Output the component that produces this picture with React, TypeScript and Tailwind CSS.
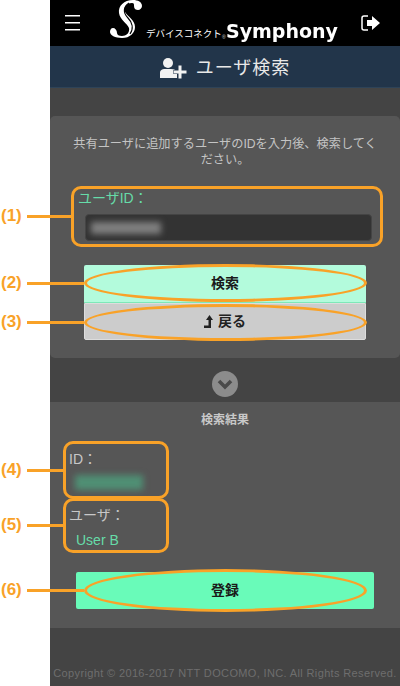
import React from 'react';

const font = { fontFamily: '"Liberation Sans", "Noto Sans CJK JP", sans-serif' };

function Callout({ label, y, lineEnd }: { label: string; y: number; lineEnd: number }) {
  return (
    <div className="absolute left-0 flex items-center" style={{ top: y - 10, height: 20 }}>
      <span className="w-[27px] whitespace-nowrap pl-[1px] text-[17px] font-bold leading-5 text-[#f9a228]">{label}</span>
      <span className="h-[3px] bg-[#f9a228]" style={{ width: lineEnd - 27 }} />
    </div>
  );
}

function Ring({ x, y, w, h, round }: { x: number; y: number; w: number; h: number; round?: boolean }) {
  return (
    <div
      className={`pointer-events-none absolute border-[3px] border-[#f9a228] ${round ? 'rounded-[50%]' : 'rounded-[10px]'}`}
      style={{ left: x, top: y, width: w, height: h }}
    />
  );
}

function Logo() {
  return (
    <div className="flex h-[46px] w-[226px] items-end">
      <svg width="34" height="40" viewBox="0 0 34 40" className="mb-[6px] shrink-0">
        <path
          d="M32 6C32 2 28 0 23 0C14 0 8 6 9 13C10 20 17 23 19 28C20 33 16 36 12 36C9 36 7 35 7 33C7 30 5 28 3 28C1 28 0 30 0 32C0 35 5 38 12 38C20 38 25 33 25 27C25 20 18 17 15 12C13 8 16 3 22 3C24 3 24 4 24 6C24 9 26 10 28 10C30 10 32 8 32 6Z"
          fill="#fff"
        />
        <path d="M19 3C13 7 13 13 18 18C22 22 24 28 20 34" fill="none" stroke="#000" strokeWidth="1.200" />
      </svg>
      <span className="mb-[6px] ml-[2px] w-[76px] shrink-0 whitespace-nowrap text-[9.5px] leading-3 text-white">デバイスコネクト</span>
      <span className="mb-[6px] w-[4px] shrink-0 text-[5px] leading-none text-gray-300">®</span>
      <span
        className="mb-[3px] w-[110px] shrink-0 origin-left scale-x-[0.95] whitespace-nowrap text-[20px] font-bold leading-6 text-white"
        style={{ fontFamily: '"DejaVu Sans", sans-serif' }}
      >
        Symphony
      </span>
    </div>
  );
}

export default function App() {
  return (
    <div className="relative flex h-[686px] w-[400px] overflow-hidden bg-white" style={font}>
      <div className="w-[50px] shrink-0" />
      <div className="flex min-w-0 flex-1 flex-col bg-[#444444]">
        <header className="flex h-[46px] shrink-0 items-center bg-black pl-[15px]">
          <svg width="16" height="16" viewBox="0 0 16 16" className="shrink-0">
            <path d="M0 0h15v1.500H0zM0 7h15v1.500H0zM0 14h15v1.500H0z" fill="#fff" />
          </svg>
          <div className="ml-[29px]">
            <Logo />
          </div>
          <svg width="20" height="16" viewBox="0 0 20 16" className="ml-[25px] shrink-0">
            <path d="M7 1H3a2 2 0 0 0-2 2v10a2 2 0 0 0 2 2h4" fill="none" stroke="#fff" strokeWidth="1.500" />
            <path d="M6 5h5V1l8 7-8 7v-4H6z" fill="#fff" />
          </svg>
        </header>
        <div className="flex h-[42px] shrink-0 items-center justify-center gap-[9px] border-b border-[#2e4358] bg-[#22354a] pt-[3px]">
          <svg width="27" height="21" viewBox="0 0 27 21">
            <circle cx="8" cy="5" r="5" fill="#f2f2f2" />
            <path d="M0 20v-5c0-3 2-4 5-4h6c3 0 5 1 6 3v6z" fill="#f2f2f2" />
            <path d="M18.500 7.500h3v5h5v3h-5v5h-3v-5h-5v-3h5z" fill="#f2f2f2" stroke="#22354a" strokeWidth="1" paintOrder="stroke" />
          </svg>
          <span className="text-[18px] leading-6 tracking-[1px] text-[#e8e8e8]">ユーザ検索</span>
        </div>
        <div className="h-[28px] shrink-0" />
        <section className="h-[242px] shrink-0 rounded-[5px] bg-[#565656] px-[21px] pt-[20px]">
          <p className="text-center text-[12.2px] leading-4 text-[#c4c4c4]">
            共有ユーザに追加するユーザのIDを入力後、検索してください。
          </p>
          <label className="mt-[20px] block pl-[7px] text-[14px] leading-5 text-[#66dca9]">ユーザID：</label>
          <div className="ml-[14px] mt-[6px] flex h-[27px] w-[287px] items-center rounded-[4px] border border-[#444] bg-[#333333] pl-[5px]">
            <div className="h-[12px] w-[70px] bg-[#808080] blur-[3px]" />
          </div>
          <div className="ml-[13px] mt-[24px] w-[282px]">
            <button className="flex h-[38px] w-full items-center justify-center rounded-t-[2px] border-b border-[#7ee8b8] bg-[#b3fbdc] text-[14px] font-bold text-[#1a1a1a]">
              検索
            </button>
            <button className="flex h-[37px] w-full items-center justify-center gap-[5px] rounded-b-[2px] border border-[#dddddd] bg-[#cccccc] text-[14px] font-bold text-[#222]">
              <svg width="9" height="13" viewBox="0 0 9 13">
                <path d="M5.500 0L9 5H7v8H0v-2.500h4.500V5H2z" fill="#222" />
              </svg>
              戻る
            </button>
          </div>
        </section>
        <div className="flex h-[44px] shrink-0 justify-center pt-[13px]">
          <div className="flex h-[26px] w-[26px] items-center justify-center rounded-full bg-[#8c8c8c]">
            <svg width="16" height="12" viewBox="0 0 16 12">
              <path d="M2 3l6 6 6-6" fill="none" stroke="#4a4a4a" strokeWidth="3.600" />
            </svg>
          </div>
        </div>
        <section className="h-[226px] shrink-0 bg-[#565656] pt-[10px]">
          <h2 className="text-center text-[12px] font-bold leading-4 text-[#c8c8c8]">検索結果</h2>
          <p className="ml-[19px] mt-[21px] text-[14px] leading-5 text-[#c8c8c8]">ID：</p>
          <div className="ml-[25px] mt-[6px] h-[15px] w-[68px] bg-[#4f8f74] blur-[3px]" />
          <p className="ml-[19px] mt-[15px] text-[14px] leading-5 text-[#c8c8c8]">ユーザ：</p>
          <p className="ml-[26px] mt-[5px] text-[14px] leading-5 text-[#66dca9]">User B</p>
          <button className="ml-[26px] mt-[22px] flex h-[37px] w-[298px] items-center justify-center rounded-[2px] bg-[#69fbb9] text-[14px] font-bold text-[#1a1a1a]">
            登録
          </button>
        </section>
        <div className="flex flex-1 items-end justify-center pb-[5px]">
          <span className="whitespace-nowrap text-[11px] leading-4 tracking-[0.36px] text-[#6e6e6e]">
            Copyright © 2016-2017 NTT DOCOMO, INC. All Rights Reserved.
          </span>
        </div>
      </div>

      <Callout label="(1)" y={216} lineEnd={71} />
      <Callout label="(2)" y={283} lineEnd={84} />
      <Callout label="(3)" y={322} lineEnd={84} />
      <Callout label="(4)" y={470} lineEnd={63} />
      <Callout label="(5)" y={525} lineEnd={63} />
      <Callout label="(6)" y={590} lineEnd={84} />
      <Ring x={71} y={186} w={312} h={61} />
      <Ring x={84} y={264} w={283} h={38} round />
      <Ring x={84} y={304} w={283} h={37} round />
      <Ring x={63} y={441} w={106} h={58} />
      <Ring x={63} y={498} w={106} h={55} />
      <Ring x={84} y={569} w={283} h={43} round />
    </div>
  );
}
